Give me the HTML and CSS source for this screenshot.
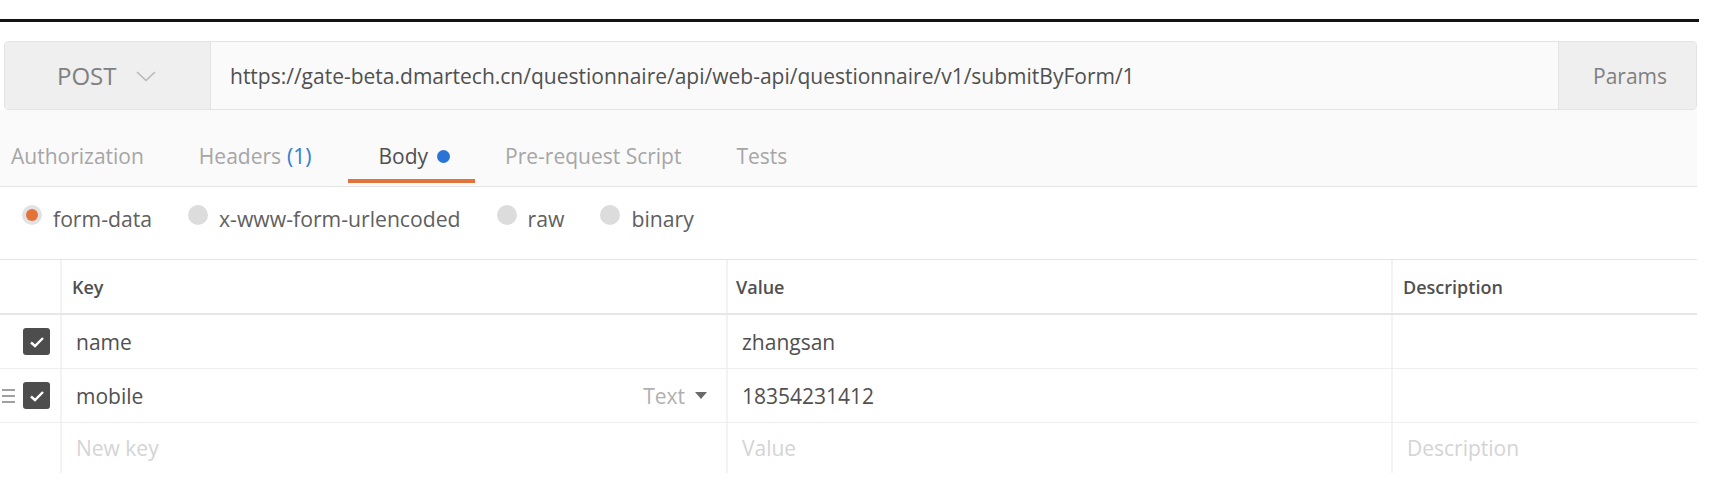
FILE: index.html
```html
<!DOCTYPE html>
<html>
<head>
<meta charset="utf-8">
<link rel="stylesheet" href="styles.css">
</head>
<body>
<div class="topline"></div>
<div class="urlbar">
  <div class="method"><span class="method-name">POST</span>
    <svg class="chev" width="20" height="11" viewBox="0 0 20 11"><path d="M1 1 L10 9.5 L19 1" fill="none" stroke="#b9b9b9" stroke-width="1.6"/></svg>
  </div>
  <div class="url">https://gate-beta.dmartech.cn/questionnaire/api/web-api/questionnaire/v1/submitByForm/1</div>
  <div class="params">Params</div>
</div>
<div class="tabs">
  <div class="tab">Authorization</div>
  <div class="tab">Headers <span class="count">(1)</span></div>
  <div class="tab active">Body <span class="dot"></span></div>
  <div class="tab">Pre-request Script</div>
  <div class="tab">Tests</div>
</div>
<div class="modes">
  <div class="mode"><span class="radio on"></span>form-data</div>
  <div class="mode"><span class="radio"></span>x-www-form-urlencoded</div>
  <div class="mode"><span class="radio"></span>raw</div>
  <div class="mode"><span class="radio"></span>binary</div>
</div>
<div class="table">
  <div class="row head">
    <div class="cell sel"></div>
    <div class="cell key">Key</div>
    <div class="cell val">Value</div>
    <div class="cell desc">Description</div>
  </div>
  <div class="row">
    <div class="cell sel"><span class="check"><svg width="16" height="12" viewBox="0 0 16 12"><path d="M2 6.5 L6 10 L14 2" fill="none" stroke="#fff" stroke-width="2.4"/></svg></span></div>
    <div class="cell key">name</div>
    <div class="cell val">zhangsan</div>
    <div class="cell desc"></div>
  </div>
  <div class="row">
    <div class="cell sel"><span class="handle"><i></i><i></i><i></i></span><span class="check"><svg width="16" height="12" viewBox="0 0 16 12"><path d="M2 6.5 L6 10 L14 2" fill="none" stroke="#fff" stroke-width="2.4"/></svg></span></div>
    <div class="cell key"><span>mobile</span><span class="type">Text <span class="caret"></span></span></div>
    <div class="cell val">18354231412</div>
    <div class="cell desc"></div>
  </div>
  <div class="row last">
    <div class="cell sel"></div>
    <div class="cell key ph">New key</div>
    <div class="cell val ph">Value</div>
    <div class="cell desc ph">Description</div>
  </div>
</div>
</body>
</html>
```

FILE: styles.css
```css
* { box-sizing: border-box; }
body {
  margin: 0;
  background: #fff;
  font-family: "Open Sans", "Noto Sans", sans-serif;
  color: #505050;
  width: 1722px;
}
.topline {
  margin-top: 19px;
  width: 1699px;
  height: 3px;
  background: #141414;
}
.urlbar {
  margin: 19px 0 0 4px;
  width: 1693px;
  height: 69px;
  display: flex;
  border: 1px solid #e4e4e4;
  border-radius: 4px;
  overflow: hidden;
}
.method {
  width: 206px;
  background: #efefef;
  display: flex;
  align-items: center;
  padding-left: 52px;
  border-right: 1px solid #e4e4e4;
}
.method-name {
  font-size: 24px;
  color: #808080;
}
.chev { margin-left: 20px; margin-top: 2px; }
.url {
  flex: 1;
  background: #fafafa;
  display: flex;
  align-items: center;
  padding-left: 19px;
  font-size: 21px;
  color: #505050;
}
.params {
  width: 138px;
  background: #efefef;
  border-left: 1px solid #e4e4e4;
  display: flex;
  align-items: center;
  padding-left: 34px;
  font-size: 21px;
  color: #808080;
}
.tabs {
  width: 1697px;
  height: 77px;
  background: #fafafa;
  border-bottom: 1px solid #e4e4e4;
  display: flex;
  align-items: flex-end;
  padding-left: 11px;
  padding-bottom: 16px;
  gap: 55px;
}
.tab {
  font-size: 21px;
  line-height: 28px;
  color: #a6a6a6;
  position: relative;
  display: flex;
  align-items: center;
}
.tab .count { color: #2f7fd1; margin-left: 6px; }
.tab.active { color: #505050; margin-left: 12px; }
.tab.active::after {
  content: "";
  position: absolute;
  left: -30px;
  right: -25px;
  bottom: -13px;
  height: 4px;
  background: #e4733a;
}
.dot {
  display: inline-block;
  width: 13px;
  height: 13px;
  border-radius: 50%;
  background: #2a74d8;
  margin-left: 9px;
}
.modes {
  width: 1697px;
  height: 73px;
  border-bottom: 1px solid #e4e4e4;
  display: flex;
  align-items: center;
  padding-left: 22px;
  padding-bottom: 10px;
  gap: 36px;
}
.mode {
  display: flex;
  align-items: center;
  font-size: 21.2px;
  color: #606060;
}
.radio {
  width: 20px;
  height: 20px;
  border-radius: 50%;
  background: #dcdcdc;
  margin-right: 11px;
  margin-top: -6px;
  position: relative;
}
.radio.on { background: #e2e2e2; }
.radio.on::after {
  content: "";
  position: absolute;
  left: 4px;
  top: 4px;
  width: 12px;
  height: 12px;
  border-radius: 50%;
  background: #e4733a;
}
.table { width: 1697px; }
.row {
  display: grid;
  grid-template-columns: 62px 666px 665px 304px;
  height: 54px;
  border-bottom: 1px solid #eeeeee;
}
.row.head { height: 55px; border-bottom: 2px solid #e6e6e6; }
.row.last { border-bottom: none; height: 50px; }
.cell {
  display: flex;
  align-items: center;
  font-size: 21px;
  color: #505050;
  padding-left: 14px;
}
.cell.key, .cell.val { border-right: 2px solid #f3f3f3; }
.cell.sel { border-right: 2px solid #f3f3f3; padding-left: 2px; }
.head .cell {
  font-size: 18px;
  font-weight: 600;
  color: #505050;
  padding-left: 10px;
}
.head .cell.val { padding-left: 8px; }
.cell.ph { color: #d4d4d4; }
.cell.key { justify-content: space-between; padding-right: 19px; }
.type { color: #b0b0b0; display: flex; align-items: center; }
.caret {
  display: inline-block;
  width: 0; height: 0;
  border-left: 6px solid transparent;
  border-right: 6px solid transparent;
  border-top: 7px solid #6a6a6a;
  margin-left: 10px;
}
.check {
  width: 27px;
  height: 27px;
  border-radius: 3px;
  background: #4d4d4d;
  display: flex;
  align-items: center;
  justify-content: center;
  margin-left: 21px;
}
.handle {
  width: 13px;
  display: flex;
  flex-direction: column;
  gap: 4px;
  margin-right: -13px;
}
.handle i {
  display: block;
  height: 2px;
  background: #a0a0a0;
}
```
